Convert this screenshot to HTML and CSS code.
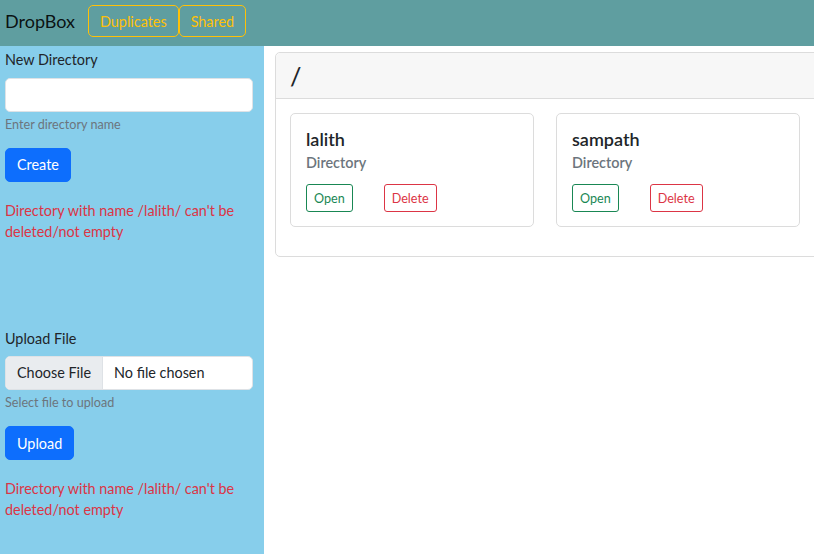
FILE: index.html
```html
<!DOCTYPE html>
<html>
<head>
<meta charset="utf-8">
<link rel="stylesheet" href="styles.css">
</head>
<body>
<nav class="navbar">
  <span class="brand">DropBox</span>
  <button class="nav-btn">Duplicates</button>
  <button class="nav-btn">Shared</button>
</nav>
<div class="layout">
  <aside class="sidebar">
    <div class="form-group">
      <label class="form-label">New Directory</label>
      <div class="text-input"></div>
      <div class="form-text">Enter directory name</div>
      <button class="btn-primary">Create</button>
      <p class="error">Directory with name /lalith/ can't be deleted/not empty</p>
    </div>
    <div class="form-group upload">
      <label class="form-label">Upload File</label>
      <div class="file-input"><span class="file-btn">Choose File</span><span class="file-name">No file chosen</span></div>
      <div class="form-text">Select file to upload</div>
      <button class="btn-primary">Upload</button>
      <p class="error">Directory with name /lalith/ can't be deleted/not empty</p>
    </div>
  </aside>
  <main class="main">
    <div class="card">
      <div class="card-header"><h3 class="path">/</h3></div>
      <div class="card-body">
        <div class="item">
          <h5 class="item-title">lalith</h5>
          <h6 class="item-sub">Directory</h6>
          <div class="actions"><button class="btn-sm open">Open</button><button class="btn-sm del">Delete</button></div>
        </div>
        <div class="item">
          <h5 class="item-title">sampath</h5>
          <h6 class="item-sub">Directory</h6>
          <div class="actions"><button class="btn-sm open">Open</button><button class="btn-sm del">Delete</button></div>
        </div>
      </div>
    </div>
  </main>
</div>
</body>
</html>
```
FILE: styles.css
```css
* { box-sizing: border-box; }
html, body { margin: 0; height: 100%; }
body {
  font-family: "Lato", "Liberation Sans", sans-serif;
  font-size: 14.4px;
  line-height: 1.5;
  color: #212529;
  background: #fff;
  overflow: hidden;
}
button { font-family: inherit; cursor: pointer; }
.navbar {
  height: 46px;
  background: #5f9ea0;
  display: flex;
  align-items: center;
  padding: 0 0 4px 5px;
}
.brand {
  font-size: 18px;
  color: rgba(0,0,0,.9);
  margin-right: 13px;
}
.nav-btn {
  height: 32px;
  padding: 0 11px;
  font-size: 14.4px;
  color: #ffc107;
  background: transparent;
  border: 1px solid #ffc107;
  border-radius: 5px;
}
.layout {
  display: flex;
  height: calc(100% - 46px);
}
.sidebar {
  width: 264px;
  flex: none;
  background: #87ceeb;
  padding: 3px 11px 0 5px;
}
.form-label {
  display: block;
  margin-bottom: 7px;
}
.text-input, .file-input {
  height: 34px;
  background: #fff;
  border: 1px solid #dee2e6;
  border-radius: 5px;
}
.file-input {
  display: flex;
  align-items: center;
  overflow: hidden;
}
.file-btn {
  height: 100%;
  display: flex;
  align-items: center;
  padding: 0 11px;
  background: #e9ecef;
  border-right: 1px solid #dee2e6;
}
.file-name { padding-left: 11px; }
.form-text {
  margin-top: 4px;
  font-size: 12.6px;
  color: #6c757d;
}
.btn-primary {
  display: block;
  margin-top: 13px;
  height: 34px;
  padding: 0 11px;
  font-size: 14.4px;
  color: #fff;
  background: #0d6efd;
  border: 1px solid #0d6efd;
  border-radius: 5px;
}
.error {
  margin: 18px 0 0;
  color: #dc3545;
  line-height: 21px;
}
.upload { margin-top: 86px; }
.main {
  flex: 1;
  padding: 6px 0 0 11px;
  overflow: hidden;
}
.card {
  width: 580px;
  border: 1px solid #dcdcdc;
  border-radius: 5px;
}
.card-header {
  background: #f7f7f7;
  border-bottom: 1px solid #dcdcdc;
  padding: 8px 14px 7px;
  border-radius: 5px 5px 0 0;
}
.path {
  margin: 0;
  font-size: 25px;
  font-weight: 500;
  line-height: 30px;
}
.card-body {
  display: flex;
  gap: 22px;
  padding: 14px 14px 29px;
}
.item {
  width: 244px;
  border: 1px solid #dcdcdc;
  border-radius: 5px;
  padding: 14px 15px;
}
.item-title {
  margin: 0 0 4px;
  font-size: 18px;
  font-weight: 600;
  line-height: 22px;
}
.item-sub {
  margin: 0 0 12px;
  font-size: 14.4px;
  font-weight: 600;
  line-height: 18px;
  color: #6c757d;
}
.actions {
  display: flex;
  gap: 31px;
}
.btn-sm {
  height: 28px;
  padding: 0 7px;
  font-size: 12.6px;
  background: #fff;
  border-radius: 3px;
}
.open { color: #198754; border: 1px solid #198754; }
.del { color: #dc3545; border: 1px solid #dc3545; }
```
